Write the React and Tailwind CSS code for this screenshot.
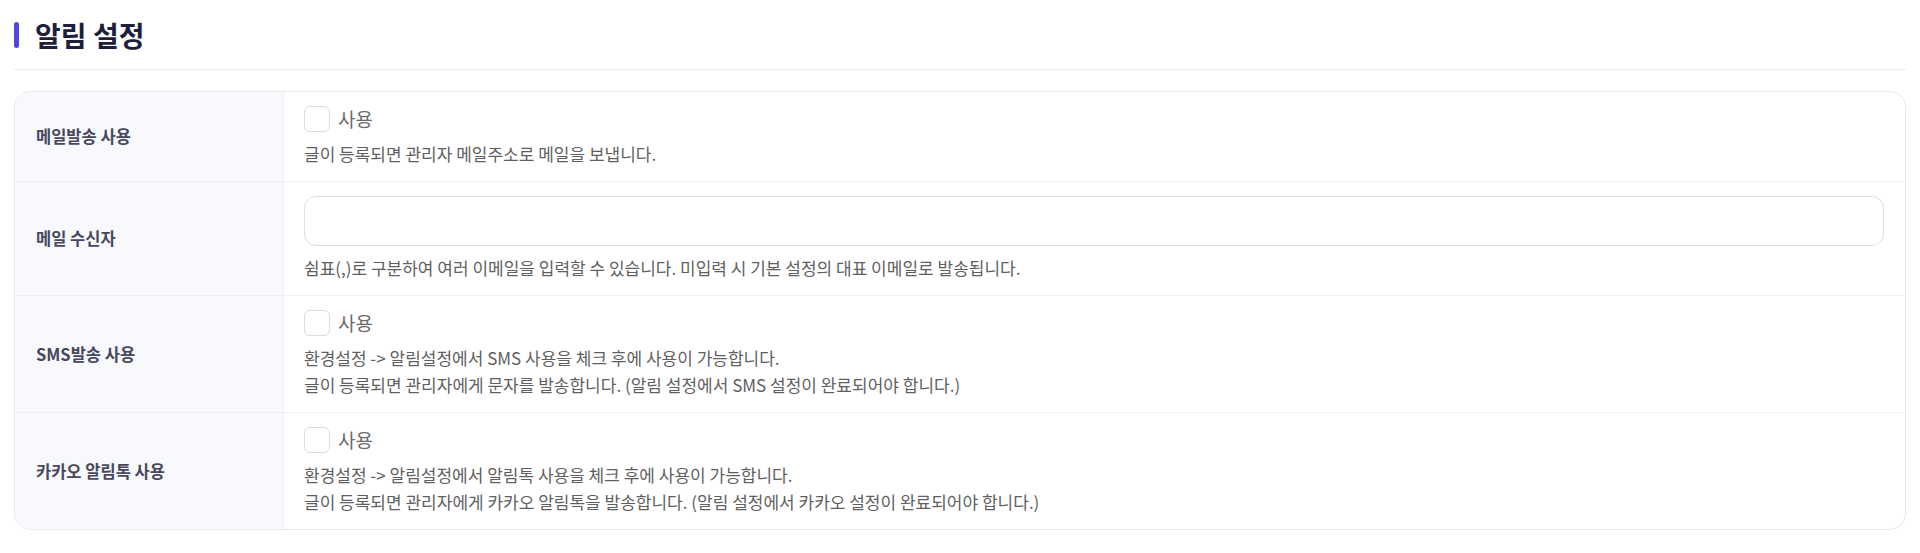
const rows = [
  {
    label: "메일발송 사용",
    type: "checkbox",
    desc: ["글이 등록되면 관리자 메일주소로 메일을 보냅니다."],
  },
  {
    label: "메일 수신자",
    type: "input",
    desc: ["쉼표(,)로 구분하여 여러 이메일을 입력할 수 있습니다. 미입력 시 기본 설정의 대표 이메일로 발송됩니다."],
  },
  {
    label: "SMS발송 사용",
    type: "checkbox",
    desc: [
      "환경설정 -> 알림설정에서 SMS 사용을 체크 후에 사용이 가능합니다.",
      "글이 등록되면 관리자에게 문자를 발송합니다. (알림 설정에서 SMS 설정이 완료되어야 합니다.)",
    ],
  },
  {
    label: "카카오 알림톡 사용",
    type: "checkbox",
    desc: [
      "환경설정 -> 알림설정에서 알림톡 사용을 체크 후에 사용이 가능합니다.",
      "글이 등록되면 관리자에게 카카오 알림톡을 발송합니다. (알림 설정에서 카카오 설정이 완료되어야 합니다.)",
    ],
  },
];

const font = { fontFamily: '"Noto Sans CJK KR", "Noto Sans", sans-serif' };

export default function App() {
  return (
    <div className="w-full min-h-[553px] bg-white px-[14px]" style={font}>
      {/* 제목 */}
      <div className="flex items-center gap-[16px] pt-[18px] pb-[17px] border-b border-[#ececef]">
        <span className="w-[5px] h-[26px] rounded-full bg-[#5146e0]" />
        <h1 className="text-[28px] leading-[34px] font-bold text-[#1e1f3b]">
          알림 설정
        </h1>
      </div>

      <div className="mt-[21px] border border-[#e9e9ee] rounded-2xl overflow-hidden">
        {rows.map((row, idx) => (
          <div
            key={idx}
            className={`flex ${idx > 0 ? "border-t border-[#f0f0f3]" : ""}`}
          >
            <div className="w-[269px] shrink-0 bg-[#f8f9fc] border-r border-[#f0f0f3] flex items-center pl-[21px]">
              <span className="text-[16.5px] font-semibold text-[#474860]">
                {row.label}
              </span>
            </div>
            <div className="flex-1 pl-[20px] pr-[21px] py-[14px]">
              {row.type === "checkbox" ? (
                <label className="flex items-center gap-[8px] h-[26px]">
                  <span className="w-[26px] h-[26px] rounded-[6px] border border-[#dcdce1] bg-white" />
                  <span className="text-[19px] text-[#6b6b6b]">사용</span>
                </label>
              ) : (
                <input
                  type="text"
                  className="w-full h-[50px] rounded-xl border border-[#dedee3] bg-white outline-none"
                />
              )}
              <div className="mt-[8px] text-[17px] leading-[27px] text-[#5f5f5f]">
                {row.desc.map((line, i) => (
                  <p key={i}>{line}</p>
                ))}
              </div>
            </div>
          </div>
        ))}
      </div>
    </div>
  );
}
